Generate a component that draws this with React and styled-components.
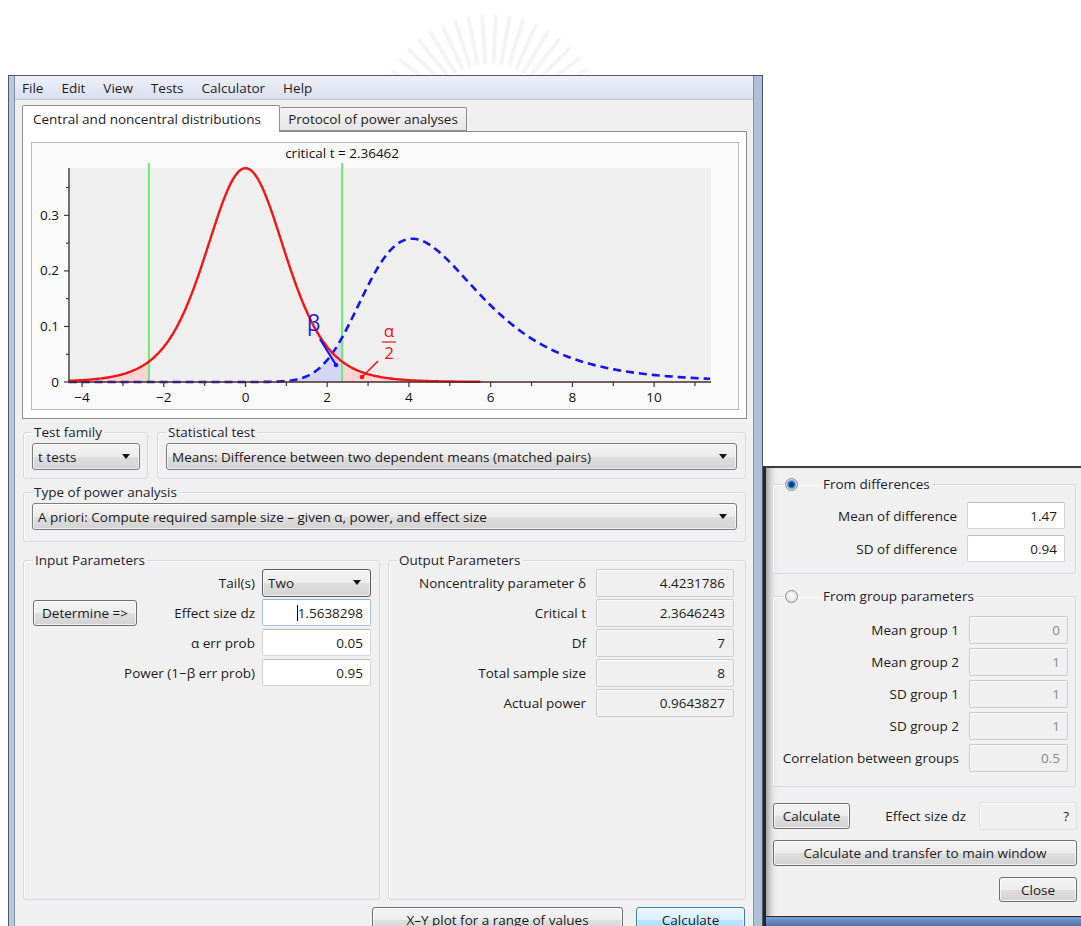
import React, { useMemo } from 'react'
import styled, { createGlobalStyle } from 'styled-components'

const GlobalStyle = createGlobalStyle`
  html, body { margin: 0; padding: 0; background: #fff; overflow: hidden; }
  body {
    font-family: 'Open Sans', 'Noto Sans', sans-serif;
    font-size: 13.5px;
    color: #1c1c1c;
  }
  * { box-sizing: border-box; }
`

const FONT = "'Open Sans', 'Noto Sans', sans-serif"

/* ---------- page / windows ---------- */

const Page = styled.div`
  width: 1081px;
  height: 926px;
  overflow: hidden;
  background: #fff;
`
const Banner = styled.div`
  height: 75px;
  overflow: hidden;
`
const Desk = styled.div`
  display: flex;
  align-items: flex-start;
  padding-left: 8px;
`
const MainWindow = styled.div`
  flex-shrink: 0;
  width: 755px;
  height: 851px;
  border: 1px solid #4f5868;
  border-bottom: none;
  padding: 0 8px 0 5px;
  background: linear-gradient(90deg, #b9c7db, #cdd8e8 45%, #aebfd8);
`
const MainInner = styled.div`
  height: 100%;
  background: #f0f0f0;
  border-left: 1px solid #8690a3;
  border-right: 1px solid #8690a3;
`
const MenuBar = styled.div`
  height: 24px;
  display: flex;
  align-items: center;
  gap: 18px;
  padding-left: 7px;
  background: linear-gradient(#eef1fa, #e4e8f6 50%, #d9dfef);
  border-bottom: 1px solid #c2c8d8;
`
const MenuItem = styled.span`
  color: #1e1e1e;
`
const Body = styled.div`
  padding: 5px 6px 0 7px;
`

/* ---------- tabs ---------- */

const TabStrip = styled.div`
  display: flex;
  align-items: flex-end;
`
const Tab = styled.div`
  height: ${p => (p.$active ? 27 : 24)}px;
  width: ${p => p.$w}px;
  margin-bottom: ${p => (p.$active ? -1 : 0)}px;
  position: relative;
  z-index: ${p => (p.$active ? 1 : 0)};
  display: flex;
  align-items: center;
  justify-content: ${p => (p.$active ? 'flex-start' : 'center')};
  padding-left: ${p => (p.$active ? 10 : 0)}px;
  border: 1px solid #8e8f8f;
  border-bottom: ${p => (p.$active ? 'none' : '1px solid #8e8f8f')};
  border-left: ${p => (p.$active ? '1px solid #8e8f8f' : 'none')};
  border-radius: 2px 2px 0 0;
  background: ${p => (p.$active ? '#fff' : 'linear-gradient(#f3f3f3, #e6e6e6)')};
  white-space: nowrap;
`
const TabPanel = styled.div`
  height: 288px;
  border: 1px solid #8e8f8f;
  background: #fff;
  padding: 10px 7px 8px 8px;
`
const ChartPanel = styled.div`
  height: 268px;
  border: 1px solid #b9b9b9;
  background: #fafafa;
`

/* ---------- group boxes ---------- */

const Section = styled.div`
  padding: 0 1px;
`
const Row = styled.div`
  display: flex;
  gap: ${p => p.$gap || 9}px;
  margin-top: ${p => p.$top || 0}px;
`
const Group = styled.fieldset`
  margin: 0;
  min-width: 0;
  flex: ${p => (p.$w ? '0 0 auto' : '1 1 0')};
  width: ${p => (p.$w ? p.$w + 'px' : 'auto')};
  height: ${p => (p.$h ? p.$h + 'px' : 'auto')};
  margin-top: ${p => p.$top || 0}px;
  padding: ${p => p.$pad};
  border: 1px solid #d6dadf;
  border-radius: 3px;
  box-shadow: inset 1px 1px 0 #fbfbfb;
`
const Legend = styled.legend`
  padding: 0 2px;
  margin-left: ${p => p.$ml || 0}px;
  line-height: ${p => p.$lh || 17}px;
  color: #241c30;
  display: flex;
  align-items: center;
  gap: 25px;
`

/* ---------- controls ---------- */

const Combo = styled.div`
  height: ${p => p.$h || 27}px;
  display: flex;
  align-items: center;
  justify-content: space-between;
  padding: 0 9px 0 5px;
  border: 1px solid ${p => (p.$dark ? '#5e5e5e' : '#7d7d7d')};
  border-radius: 3px;
  background: linear-gradient(#f4f4f4, #ececec 50%, #dedede 51%, #d3d3d3);
  box-shadow: inset 0 0 0 1px rgba(255, 255, 255, 0.6);
  white-space: nowrap;
  overflow: hidden;
`
const Arrow = styled.span`
  flex-shrink: 0;
  width: 0;
  height: 0;
  border-left: 4.5px solid transparent;
  border-right: 4.5px solid transparent;
  border-top: 5px solid #111;
`
const Button = styled.div`
  height: ${p => p.$h || 26}px;
  width: ${p => (p.$w ? p.$w + 'px' : 'auto')};
  align-self: ${p => p.$align || 'auto'};
  margin: ${p => p.$m || 0};
  display: flex;
  align-items: center;
  justify-content: center;
  border: 1px solid ${p => (p.$primary ? '#3c7fb1' : '#707070')};
  border-radius: 3px;
  background: ${p =>
    p.$primary
      ? 'linear-gradient(#eaf6fd, #d9f0fc 50%, #bee6fd 51%, #a7d9f5)'
      : 'linear-gradient(#f4f4f4, #ededed 50%, #dfdfdf 51%, #d2d2d2)'};
  box-shadow: inset 0 0 0 1px rgba(255, 255, 255, 0.7);
  white-space: nowrap;
`
const Field = styled.div`
  height: ${p => p.$h || 27}px;
  display: flex;
  align-items: center;
  justify-content: flex-end;
  padding-right: ${p => p.$pr || 7}px;
  border: 1px solid ${p => (p.$focus ? '#a7c3e0' : '#d4d4d4')};
  border-top-color: ${p => (p.$focus ? '#8fb1d6' : '#bdbdbd')};
  border-radius: 2px;
  background: #fff;
  white-space: nowrap;
`
const ReadOnly = styled.div`
  height: ${p => p.$h || 28}px;
  display: flex;
  align-items: center;
  justify-content: flex-end;
  padding-right: ${p => p.$pr || 8}px;
  border: 1px solid ${p => (p.$faint ? '#e0e0e0' : '#cdcdcd')};
  border-radius: 2px;
  background: #f0f0f0;
  box-shadow: inset 1px 1px 0 #fafafa;
  color: ${p => (p.$muted ? '#8a8a8a' : '#1c1c1c')};
  white-space: nowrap;
`
const Caret = styled.span`
  width: 1px;
  height: 16px;
  background: #000;
`
/* right-aligned caption; long captions spill leftwards into the free column */
const Label = styled.div`
  min-width: 0;
  display: flex;
  justify-content: flex-end;
  white-space: nowrap;
`
const ParamGrid = styled.div`
  display: grid;
  grid-template-columns: ${p => p.$cols};
  grid-auto-rows: ${p => p.$rowH}px;
  column-gap: ${p => p.$colGap}px;
  row-gap: ${p => p.$rowGap}px;
  align-items: center;
`
const ButtonBar = styled.div`
  display: flex;
  justify-content: flex-end;
  gap: 13px;
  margin-top: 7px;
  padding-right: 1px;
`

/* ---------- effect size dialog ---------- */

const Dialog = styled.div`
  flex-shrink: 0;
  width: 322px;
  margin-top: 391px;
  border-left: 3px solid #262626;
  border-top: 2px solid #3c3c3c;
  background: #f0f0f0;
  box-shadow: inset 9px 0 8px -7px rgba(0, 0, 0, 0.45);
`
const DialogBody = styled.div`
  display: flex;
  flex-direction: column;
  padding: 7px 6px 14px 6px;
`
const DialogFrame = styled.div`
  height: 12px;
  border-top: 1px solid #2a2a2a;
  background: linear-gradient(#7e9fcc, #3d68a8);
`
const Radio = styled.span`
  width: 13px;
  height: 13px;
  border-radius: 50%;
  border: 1px solid #8a8a8a;
  background: ${p =>
    p.$on
      ? 'radial-gradient(circle, #123f73 0 2px, #2b73c0 3px, #8cc0ec 4.5px, #eef4fa 5.5px)'
      : 'radial-gradient(circle at 50% 40%, #fdfdfd, #d9d9d9)'};
`
const CalcRow = styled.div`
  display: grid;
  grid-template-columns: 77px 1fr 98px;
  column-gap: 13px;
  align-items: center;
  margin-top: 15px;
  padding: 0 2px 0 1px;
`

/* ---------- distribution plot ---------- */

const X0 = 213.5
const SX = 40.86
const Y0 = 239
const SY = 555.5
const T_MIN = -4.33
const T_MAX = 11.37
const CRIT = 2.36462
const DF = 7
const NCP = 4.4231786
const G35 = 3.323350970447843

const px = t => X0 + SX * t
const py = d => Y0 - SY * d

const tDensity = t =>
  (6 / (Math.sqrt(DF * Math.PI) * G35)) * Math.pow(1 + (t * t) / DF, -(DF + 1) / 2)
const chiDensity = v => (Math.pow(v, 2.5) * Math.exp(-v / 2)) / (Math.pow(2, 3.5) * G35)
const normal = z => Math.exp((-z * z) / 2) / Math.sqrt(2 * Math.PI)

// noncentral t: integrate over the chi-square scale with Simpson's rule
const nctDensity = t => {
  const n = 300
  const h = 60 / n
  let s = 0
  for (let i = 0; i <= n; i++) {
    const v = i * h
    const w = i === 0 || i === n ? 1 : i % 2 ? 4 : 2
    const r = Math.sqrt(v / DF)
    s += w * chiDensity(v) * r * normal(t * r - NCP)
  }
  return (s * h) / 3
}

const sample = (f, a, b, step = 0.04) => {
  const pts = []
  for (let t = a; t < b; t += step) pts.push([px(t), py(f(t))])
  pts.push([px(b), py(f(b))])
  return pts
}
const linePath = pts => 'M' + pts.map(p => p[0].toFixed(2) + ',' + p[1].toFixed(2)).join(' L')
const areaPath = (pts, a, b) =>
  `M${px(a).toFixed(2)},${Y0} L` +
  pts.map(p => p[0].toFixed(2) + ',' + p[1].toFixed(2)).join(' L') +
  ` L${px(b).toFixed(2)},${Y0} Z`

function DistributionChart() {
  const paths = useMemo(() => {
    const red = sample(tDensity, T_MIN, 5.75)
    const blue = sample(nctDensity, T_MIN, T_MAX, 0.05)
    return {
      red: linePath(red),
      blue: linePath(blue),
      leftTail: areaPath(sample(tDensity, T_MIN, -CRIT), T_MIN, -CRIT),
      rightTail: areaPath(sample(tDensity, CRIT, T_MAX), CRIT, T_MAX),
      beta: areaPath(sample(nctDensity, T_MIN, CRIT, 0.05), T_MIN, CRIT),
    }
  }, [])

  const xTicks = []
  for (let i = -4; i <= 11; i++) xTicks.push(i)
  const yTicks = [0, 0.05, 0.1, 0.15, 0.2, 0.25, 0.3, 0.35]

  return (
    <svg width="706" height="266" style={{ display: 'block' }} fontFamily={FONT}>
      <text x={px(CRIT)} y="14.5" fontSize="13.5" textAnchor="middle" fill="#111">
        critical t = 2.36462
      </text>
      <rect x="37" y="25" width="642" height="214" fill="#efefef" />

      <path d={paths.leftTail} fill="#fcd4d6" />
      <path d={paths.rightTail} fill="#fcd4d6" />
      <path d={paths.beta} fill="#d5d5f7" />

      <line x1={px(-CRIT)} y1="20" x2={px(-CRIT)} y2={Y0} stroke="#6fea6f" strokeWidth="2" />
      <line x1={px(CRIT)} y1="20" x2={px(CRIT)} y2={Y0} stroke="#6fea6f" strokeWidth="2" />

      <path d={paths.blue} fill="none" stroke="#1414f5" strokeWidth="2.6" strokeDasharray="8 5" />
      <path d={paths.red} fill="none" stroke="#f51414" strokeWidth="2.4" />

      <line x1="37" y1="25" x2="37" y2={Y0} stroke="#3a3a3a" strokeWidth="1.4" />
      <line x1="37" y1={Y0} x2="679" y2={Y0} stroke="#4a2a2a" strokeWidth="1.6" />
      {yTicks.map((v, i) => (
        <line key={v} x1={i % 2 ? 34 : 32} y1={py(v)} x2="37" y2={py(v)} stroke="#3a3a3a" strokeWidth="1.2" />
      ))}
      {[0, 0.1, 0.2, 0.3].map(v => (
        <text key={v} x="27" y={py(v) + 4.5} fontSize="13.5" textAnchor="end" fill="#111">
          {v === 0 ? '0' : v.toFixed(1)}
        </text>
      ))}
      {xTicks.map(t => (
        <line key={t} x1={px(t)} y1={Y0} x2={px(t)} y2={Y0 + (t % 2 ? 4 : 5)} stroke="#3a3a3a" strokeWidth="1.2" />
      ))}
      {xTicks.filter(t => t % 2 === 0).map(t => (
        <text key={t} x={px(t)} y="258.5" fontSize="13.5" textAnchor="middle" fill="#111">
          {t < 0 ? '\u2212' + Math.abs(t) : t}
        </text>
      ))}

      {/* beta marker */}
      <text x="275" y="188" fontSize="21" fill="#1414f5">β</text>
      <line x1="288" y1="196" x2="304" y2="222" stroke="#1414f5" strokeWidth="2.2" />
      <circle cx="304" cy="222" r="2.3" fill="#1414f5" />

      {/* alpha / 2 marker */}
      <text x="357" y="194" fontSize="17" textAnchor="middle" fill="#f51414">α</text>
      <line x1="350" y1="199" x2="364" y2="199" stroke="#f51414" strokeWidth="1.2" />
      <text x="357" y="216" fontSize="17" textAnchor="middle" fill="#f51414">2</text>
      <line x1="346" y1="218" x2="330" y2="234" stroke="#f51414" strokeWidth="1.6" />
      <circle cx="330" cy="234" r="2.3" fill="#f51414" />
    </svg>
  )
}

/* faint seal printed on the page behind the window */
function Seal() {
  const rays = []
  for (let a = -150; a <= -30; a += 7) {
    const r = (a * Math.PI) / 180
    rays.push(
      <line
        key={a}
        x1={490 + Math.cos(r) * 66}
        y1={128 + Math.sin(r) * 66}
        x2={490 + Math.cos(r) * 112}
        y2={128 + Math.sin(r) * 112}
        stroke="#f4f4f4"
        strokeWidth="4"
        strokeLinecap="round"
      />
    )
  }
  return (
    <svg width="1081" height="75" style={{ display: 'block' }}>
      {rays}
    </svg>
  )
}

export default function App() {
  return (
    <Page>
      <GlobalStyle />
      <Banner>
        <Seal />
      </Banner>
      <Desk>
        <MainWindow>
          <MainInner>
            <MenuBar>
              <MenuItem>File</MenuItem>
              <MenuItem>Edit</MenuItem>
              <MenuItem>View</MenuItem>
              <MenuItem>Tests</MenuItem>
              <MenuItem>Calculator</MenuItem>
              <MenuItem>Help</MenuItem>
            </MenuBar>

            <Body>
              <TabStrip>
                <Tab $active $w={258}>Central and noncentral distributions</Tab>
                <Tab $w={187}>Protocol of power analyses</Tab>
              </TabStrip>
              <TabPanel>
                <ChartPanel>
                  <DistributionChart />
                </ChartPanel>
              </TabPanel>

              <Section>
                <Row $top={5} $gap={9}>
                  <Group $w={125} $pad="2px 7px 8px 8px">
                    <Legend>Test family</Legend>
                    <Combo>
                      t tests <Arrow />
                    </Combo>
                  </Group>
                  <Group $pad="2px 8px 8px 8px">
                    <Legend>Statistical test</Legend>
                    <Combo>
                      Means: Difference between two dependent means (matched pairs) <Arrow />
                    </Combo>
                  </Group>
                </Row>

                <Group $top={5} $pad="2px 8px 11px 8px">
                  <Legend>Type of power analysis</Legend>
                  <Combo>
                    A priori: Compute required sample size – given α, power, and effect size <Arrow />
                  </Combo>
                </Group>

                <Row $top={10} $gap={8}>
                  <Group $w={357} $h={348} $pad="0 8px 0 9px">
                    <Legend>Input Parameters</Legend>
                    <ParamGrid $cols="104px minmax(0, 1fr) 109px" $rowH={27} $colGap={7} $rowGap={3}>
                      <span />
                      <Label>Tail(s)</Label>
                      <Combo $h={28} $dark>
                        Two <Arrow />
                      </Combo>
                      <Button $h={26}>Determine =&gt;</Button>
                      <Label>Effect size dz</Label>
                      <Field $focus>
                        <Caret />
                        1.5638298
                      </Field>
                      <span />
                      <Label>α err prob</Label>
                      <Field>0.05</Field>
                      <span />
                      <Label>Power (1−β err prob)</Label>
                      <Field>0.95</Field>
                    </ParamGrid>
                  </Group>

                  <Group $h={348} $pad="0 11px 0 8px">
                    <Legend>Output Parameters</Legend>
                    <ParamGrid $cols="minmax(0, 1fr) 138px" $rowH={28} $colGap={10} $rowGap={2}>
                      <Label>Noncentrality parameter δ</Label>
                      <ReadOnly>4.4231786</ReadOnly>
                      <Label>Critical t</Label>
                      <ReadOnly>2.3646243</ReadOnly>
                      <Label>Df</Label>
                      <ReadOnly>7</ReadOnly>
                      <Label>Total sample size</Label>
                      <ReadOnly>8</ReadOnly>
                      <Label>Actual power</Label>
                      <ReadOnly>0.9643827</ReadOnly>
                    </ParamGrid>
                  </Group>
                </Row>

                <ButtonBar>
                  <Button $w={251}>X–Y plot for a range of values</Button>
                  <Button $w={109} $primary>Calculate</Button>
                </ButtonBar>
              </Section>
            </Body>
          </MainInner>
        </MainWindow>

        <Dialog>
          <DialogBody>
            <Group $w={304} $pad="9px 10px 11px 4px">
              <Legend $ml={6} $lh={18}>
                <Radio $on />
                From differences
              </Legend>
              <ParamGrid $cols="minmax(0, 1fr) 98px" $rowH={27} $colGap={10} $rowGap={6}>
                <Label>Mean of difference</Label>
                <Field>1.47</Field>
                <Label>SD of difference</Label>
                <Field>0.94</Field>
              </ParamGrid>
            </Group>

            <Group $w={304} $top={13} $pad="11px 7px 14px 4px">
              <Legend $ml={6} $lh={18}>
                <Radio />
                From group parameters
              </Legend>
              <ParamGrid $cols="minmax(0, 1fr) 99px" $rowH={28} $colGap={10} $rowGap={4}>
                <Label>Mean group 1</Label>
                <ReadOnly $muted $pr={7}>0</ReadOnly>
                <Label>Mean group 2</Label>
                <ReadOnly $muted $pr={7}>1</ReadOnly>
                <Label>SD group 1</Label>
                <ReadOnly $muted $pr={7}>1</ReadOnly>
                <Label>SD group 2</Label>
                <ReadOnly $muted $pr={7}>1</ReadOnly>
                <Label>Correlation between groups</Label>
                <ReadOnly $muted $pr={7}>0.5</ReadOnly>
              </ParamGrid>
            </Group>

            <CalcRow>
              <Button>Calculate</Button>
              <Label>Effect size dz</Label>
              <ReadOnly $faint $pr={7}>?</ReadOnly>
            </CalcRow>
            <Button $m="10px 2px 0 1px">Calculate and transfer to main window</Button>
            <Button $w={78} $h={25} $align="flex-end" $m="11px 2px 0 0">Close</Button>
          </DialogBody>
          <DialogFrame />
        </Dialog>
      </Desk>
    </Page>
  )
}
